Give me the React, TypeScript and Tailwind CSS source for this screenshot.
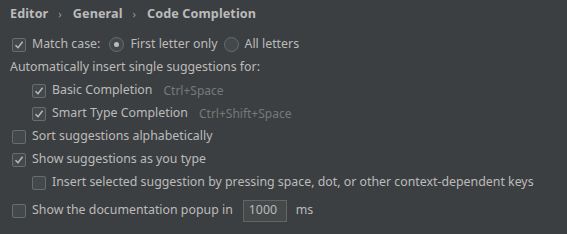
import React from "react";

function Check({ checked }: { checked?: boolean }) {
  return (
    <span className="flex h-[14px] w-[14px] shrink-0 items-center justify-center rounded-[2px] border border-[#6b6b6b] bg-[#43494a]">
      {checked && (
        <svg width="10" height="10" viewBox="0 0 10 10" fill="none">
          <path d="M1.5 5.2 L4 7.8 L8.6 1.8" stroke="#bcbcbc" strokeWidth="1.4" />
        </svg>
      )}
    </span>
  );
}

function Radio({ selected }: { selected?: boolean }) {
  return (
    <span className="flex h-[15px] w-[15px] shrink-0 items-center justify-center rounded-full border border-[#6b6b6b] bg-[#43494a]">
      {selected && <span className="h-[5px] w-[5px] rounded-full bg-[#bcbcbc]" />}
    </span>
  );
}

function Row({
  checked,
  indent,
  children,
}: {
  checked?: boolean;
  indent?: boolean;
  children: React.ReactNode;
}) {
  return (
    <div className={`flex h-[23px] items-center gap-[6px] ${indent ? "pl-[32px]" : "pl-[12px]"}`}>
      <Check checked={checked} />
      {children}
    </div>
  );
}

export default function App() {
  return (
    <div
      className="h-[234px] w-[567px] overflow-hidden bg-[#3c3f41] text-[12.35px] text-[#bbbbbb]"
      style={{ fontFamily: '"Noto Sans", "Open Sans", sans-serif' }}
    >
      <div className="flex h-[28px] items-center pl-[10px] pt-[1px] text-[12.6px] font-bold tracking-[0.1px]">
        <span>Editor</span>
        <span className="ml-[10px] mr-[11px] text-[11px] font-normal text-[#999]">›</span>
        <span>General</span>
        <span className="ml-[10px] mr-[11px] text-[11px] font-normal text-[#999]">›</span>
        <span>Code Completion</span>
      </div>
      <div className="pt-[5px]">
        <div className="flex h-[23px] items-center pl-[12px]">
          <Check checked />
          <span className="ml-[6px]">Match case:</span>
          <span className="ml-[9px] flex items-center gap-[6px]">
            <Radio selected />
            <span>First letter only</span>
          </span>
          <span className="ml-[6px] flex items-center gap-[6px]">
            <Radio />
            <span>All letters</span>
          </span>
        </div>
        <div className="flex h-[23px] items-center pl-[10px]">
          Automatically insert single suggestions for:
        </div>
        <Row checked indent>
          <span>Basic Completion</span>
          <span className="ml-[5px] text-[12px] text-[#787878]">Ctrl+Space</span>
        </Row>
        <Row checked indent>
          <span>Smart Type Completion</span>
          <span className="ml-[5px] text-[12px] text-[#787878]">Ctrl+Shift+Space</span>
        </Row>
        <Row>
          <span>Sort suggestions alphabetically</span>
        </Row>
        <Row checked>
          <span>Show suggestions as you type</span>
        </Row>
        <Row indent>
          <span>Insert selected suggestion by pressing space, dot, or other context-dependent keys</span>
        </Row>
        <div className="mt-[2px] flex h-[29px] items-center gap-[6px] pl-[12px]">
          <Check />
          <span>Show the documentation popup in</span>
          <span className="ml-[4px] flex h-[22px] w-[44px] items-center border border-[#646464] bg-[#45494a] pl-[5px]">
            1000
          </span>
          <span className="ml-[3px]">ms</span>
        </div>
      </div>
    </div>
  );
}
